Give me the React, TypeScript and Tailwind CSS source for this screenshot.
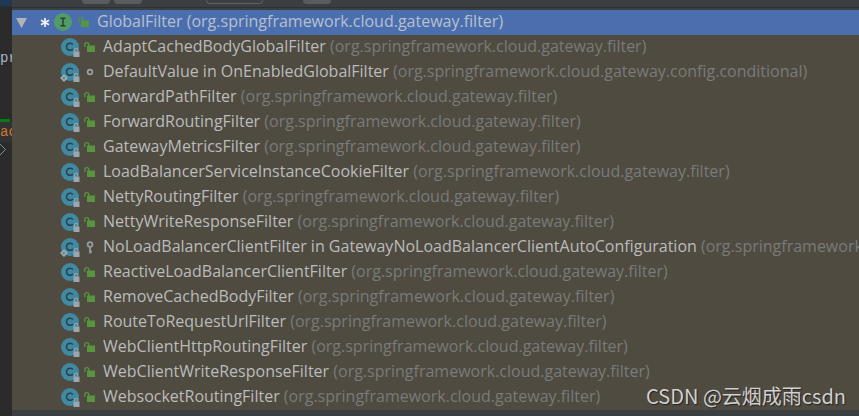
interface FilterItem {
    name: string
    pkg: string
    access: 'public' | 'package' | 'private'
    nested?: boolean
}

const PKG = '(org.springframework.cloud.gateway.filter)'

const items: FilterItem[] = [
    { name: 'AdaptCachedBodyGlobalFilter', pkg: PKG, access: 'public' },
    { name: 'DefaultValue in OnEnabledGlobalFilter', pkg: '(org.springframework.cloud.gateway.config.conditional)', access: 'package', nested: true },
    { name: 'ForwardPathFilter', pkg: PKG, access: 'public' },
    { name: 'ForwardRoutingFilter', pkg: PKG, access: 'public' },
    { name: 'GatewayMetricsFilter', pkg: PKG, access: 'public' },
    { name: 'LoadBalancerServiceInstanceCookieFilter', pkg: PKG, access: 'public' },
    { name: 'NettyRoutingFilter', pkg: PKG, access: 'public' },
    { name: 'NettyWriteResponseFilter', pkg: PKG, access: 'public' },
    { name: 'NoLoadBalancerClientFilter in GatewayNoLoadBalancerClientAutoConfiguration', pkg: PKG, access: 'private', nested: true },
    { name: 'ReactiveLoadBalancerClientFilter', pkg: PKG, access: 'public' },
    { name: 'RemoveCachedBodyFilter', pkg: PKG, access: 'public' },
    { name: 'RouteToRequestUrlFilter', pkg: PKG, access: 'public' },
    { name: 'WebClientHttpRoutingFilter', pkg: PKG, access: 'public' },
    { name: 'WebClientWriteResponseFilter', pkg: PKG, access: 'public' },
    { name: 'WebsocketRoutingFilter', pkg: PKG, access: 'public' },
]

const ClassIcon = ({ nested }: { nested?: boolean }) => (
    <svg viewBox="0 0 20 20" className="h-5 w-5 flex-shrink-0" aria-hidden="true">
        <circle cx="10" cy="9" r="9" fill="#4089a1" />
        <path d="M12.9 6.5A3.6 3.6 0 1 0 12.9 11" fill="none" stroke="#26434e" strokeWidth="1.5" />
        <path d="M14.5 13.5v-1.6a1.7 1.7 0 0 1 3.4 0v1.6" fill="none" stroke="#9aa7b0" strokeWidth="1.1" />
        <rect x="13.5" y="13.5" width="6" height="5.5" fill="#9aa7b0" />
        {nested && <path d="M4 11 8 15 4 19 0 15Z M4 13.8 2.8 15 4 16.2 5.2 15Z" fill="#9aa7b0" fillRule="evenodd" />}
    </svg>
)

const InterfaceIcon = () => (
    <svg viewBox="0 0 20 20" className="h-5 w-5 flex-shrink-0" aria-hidden="true">
        <circle cx="9" cy="9" r="9" fill="#519b68" />
        <path d="M6.5 5.2h5M6.5 12.8h5M9 5v8" fill="none" stroke="#28422f" strokeWidth="1.5" />
    </svg>
)

const AccessIcon = ({ access }: { access: FilterItem['access'] }) => (
    <svg viewBox="0 0 12 14" className="h-[14px] w-3 flex-shrink-0" aria-hidden="true">
        {access === 'public' && (
            <>
                <path d="M.8 6V3.6a2 2 0 0 1 4 0V6" fill="none" stroke="#57963e" strokeWidth="1.3" />
                <rect x="3" y="4.5" width="8" height="6.5" fill="#57963e" />
            </>
        )}
        {access === 'package' && <circle cx="6" cy="6" r="2.4" fill="none" stroke="#9aa0a4" strokeWidth="1.6" />}
        {access === 'private' && (
            <>
                <circle cx="6" cy="3.5" r="2.4" fill="none" stroke="#929a9f" strokeWidth="1.8" />
                <path d="M6 5.5v7M6 10.5h2" fill="none" stroke="#929a9f" strokeWidth="1.8" />
            </>
        )}
    </svg>
)

// sliver of the editor that stays visible left of the popup
const EditorStrip = () => (
    <div className="flex w-3 flex-shrink-0 flex-col overflow-hidden bg-[#2b2b2b] font-['Liberation_Mono',monospace] text-[14px] leading-5">
        <div className="h-[6px] flex-shrink-0 bg-[#1d3956]" />
        <div className="mt-[42px] h-5 text-[#a9b7c6]">pr</div>
        <div className="mt-[51px] h-[3px] w-[10px] flex-shrink-0 bg-[#0a7a15]" />
        <div className="flex h-5 flex-shrink-0 items-center bg-[#323232] text-[#cc7832]">ac</div>
        <svg viewBox="0 0 12 14" className="h-[14px] w-3 flex-shrink-0" fill="none" stroke="#77919b" aria-hidden="true">
            <path d="M0 2 5.5 7.5 0 13" />
        </svg>
    </div>
)

// bottom edge of the toolbar behind the popup
const ToolbarEdge = () => (
    <div className="flex h-2 flex-shrink-0 items-start border-b border-[#2f3133] pl-[70px]">
        <div className="h-1 w-7 rounded-b bg-[#595c5e]" />
        <div className="ml-1 h-1 w-7 rounded-b bg-[#595c5e]" />
        <div className="ml-16 h-1 w-[57px] rounded-b border border-t-0 border-[#5e6163]" />
        <div className="ml-10 h-1 w-7 rounded-b bg-[#595c5e]" />
    </div>
)

export default function App() {
    return (
        <div className="relative flex min-h-screen overflow-hidden bg-[#3c3f41] font-['Open_Sans','Noto_Sans_CJK_SC',sans-serif] text-[16px]">
            <EditorStrip />
            <main className="flex min-w-0 flex-1 flex-col">
                <ToolbarEdge />
                <div role="tree" aria-label="Implementations" className="mt-[2px] overflow-hidden bg-[#4f4b41] whitespace-nowrap">
                    <div role="treeitem" aria-expanded="true" aria-selected="true" className="flex h-[25px] items-center bg-[#4b6eaf] pl-1 leading-5 text-[#b8c0cd]">
                        <svg viewBox="0 0 12 10" className="h-[10px] w-3 flex-shrink-0" fill="#b3b4b5" aria-hidden="true">
                            <path d="M0 0h11L5.5 10Z" />
                        </svg>
                        <svg viewBox="0 0 10 10" className="ml-3 h-[10px] w-[10px] flex-shrink-0" stroke="#f0f2f5" strokeWidth="1.7" aria-hidden="true">
                            <path d="M5 0v9M1 2.3l8 4.5M1 6.8l8-4.5" />
                        </svg>
                        <span className="ml-1 flex items-center gap-1">
                            <InterfaceIcon />
                            <AccessIcon access="public" />
                        </span>
                        <span className="ml-[7px] pb-[3px]">GlobalFilter {PKG}</span>
                    </div>
                    {items.map((item) => (
                        <div key={item.name} role="treeitem" className="flex h-[25px] items-center pl-12 leading-5 text-[#bbbbbb]">
                            <span className="flex items-center gap-1">
                                <ClassIcon nested={item.nested} />
                                <AccessIcon access={item.access} />
                            </span>
                            <span className="ml-[7px] pb-[3px]">
                                {item.name} <span className="text-[#7a7a78]">{item.pkg}</span>
                            </span>
                        </div>
                    ))}
                </div>
            </main>
            <div className="absolute right-[13px] bottom-[6px] font-['Noto_Sans_CJK_SC',sans-serif] text-[20px] leading-7 text-[#d0d0ce] [text-shadow:1px_1px_1px_#222]">
                CSDN @云烟成雨csdn
            </div>
        </div>
    )
}
